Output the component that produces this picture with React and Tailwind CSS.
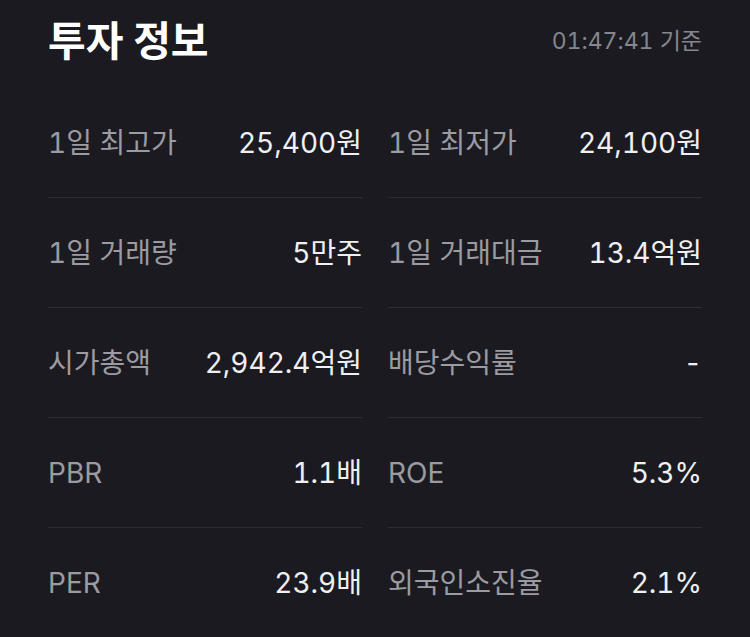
import React from 'react'

const rows = [
  [
    { label: '1일 최고가', value: '25,400원' },
    { label: '1일 최저가', value: '24,100원' },
  ],
  [
    { label: '1일 거래량', value: '5만주' },
    { label: '1일 거래대금', value: '13.4억원' },
  ],
  [
    { label: '시가총액', value: '2,942.4억원' },
    { label: '배당수익률', value: '-' },
  ],
  [
    { label: 'PBR', value: '1.1배' },
    { label: 'ROE', value: '5.3%' },
  ],
  [
    { label: 'PER', value: '23.9배' },
    { label: '외국인소진율', value: '2.1%' },
  ],
]

function Cell({ label, value, last }) {
  return (
    <div
      className={`h-[110px] flex items-center justify-between ${
        last ? '' : 'border-b border-[#2d2d34]'
      }`}
    >
      <span className="text-[28px] text-[#9b9ba1] tabular-nums">{label}</span>
      <span className="text-[28px] text-[#f0f0f2] tabular-nums">{value}</span>
    </div>
  )
}

export default function App() {
  return (
    <div
      className="min-h-screen w-[750px] h-[637px] overflow-hidden bg-[#1a1a20] px-[48px]"
      style={{ fontFamily: 'Inter, "Noto Sans CJK KR", sans-serif' }}
    >
      {/* Header */}
      <div className="h-[88px] pb-[5px] flex items-center justify-between">
        <h1 className="text-[41px] font-bold text-white">투자 정보</h1>
        <span className="text-[23px] text-[#86868c] tabular-nums">01:47:41 기준</span>
      </div>

      {/* Rows */}
      <div className="grid grid-cols-2 gap-x-[26px]">
        {rows.map((pair, i) =>
          pair.map((item, j) => (
            <Cell key={`${i}-${j}`} {...item} last={i === rows.length - 1} />
          ))
        )}
      </div>
    </div>
  )
}
